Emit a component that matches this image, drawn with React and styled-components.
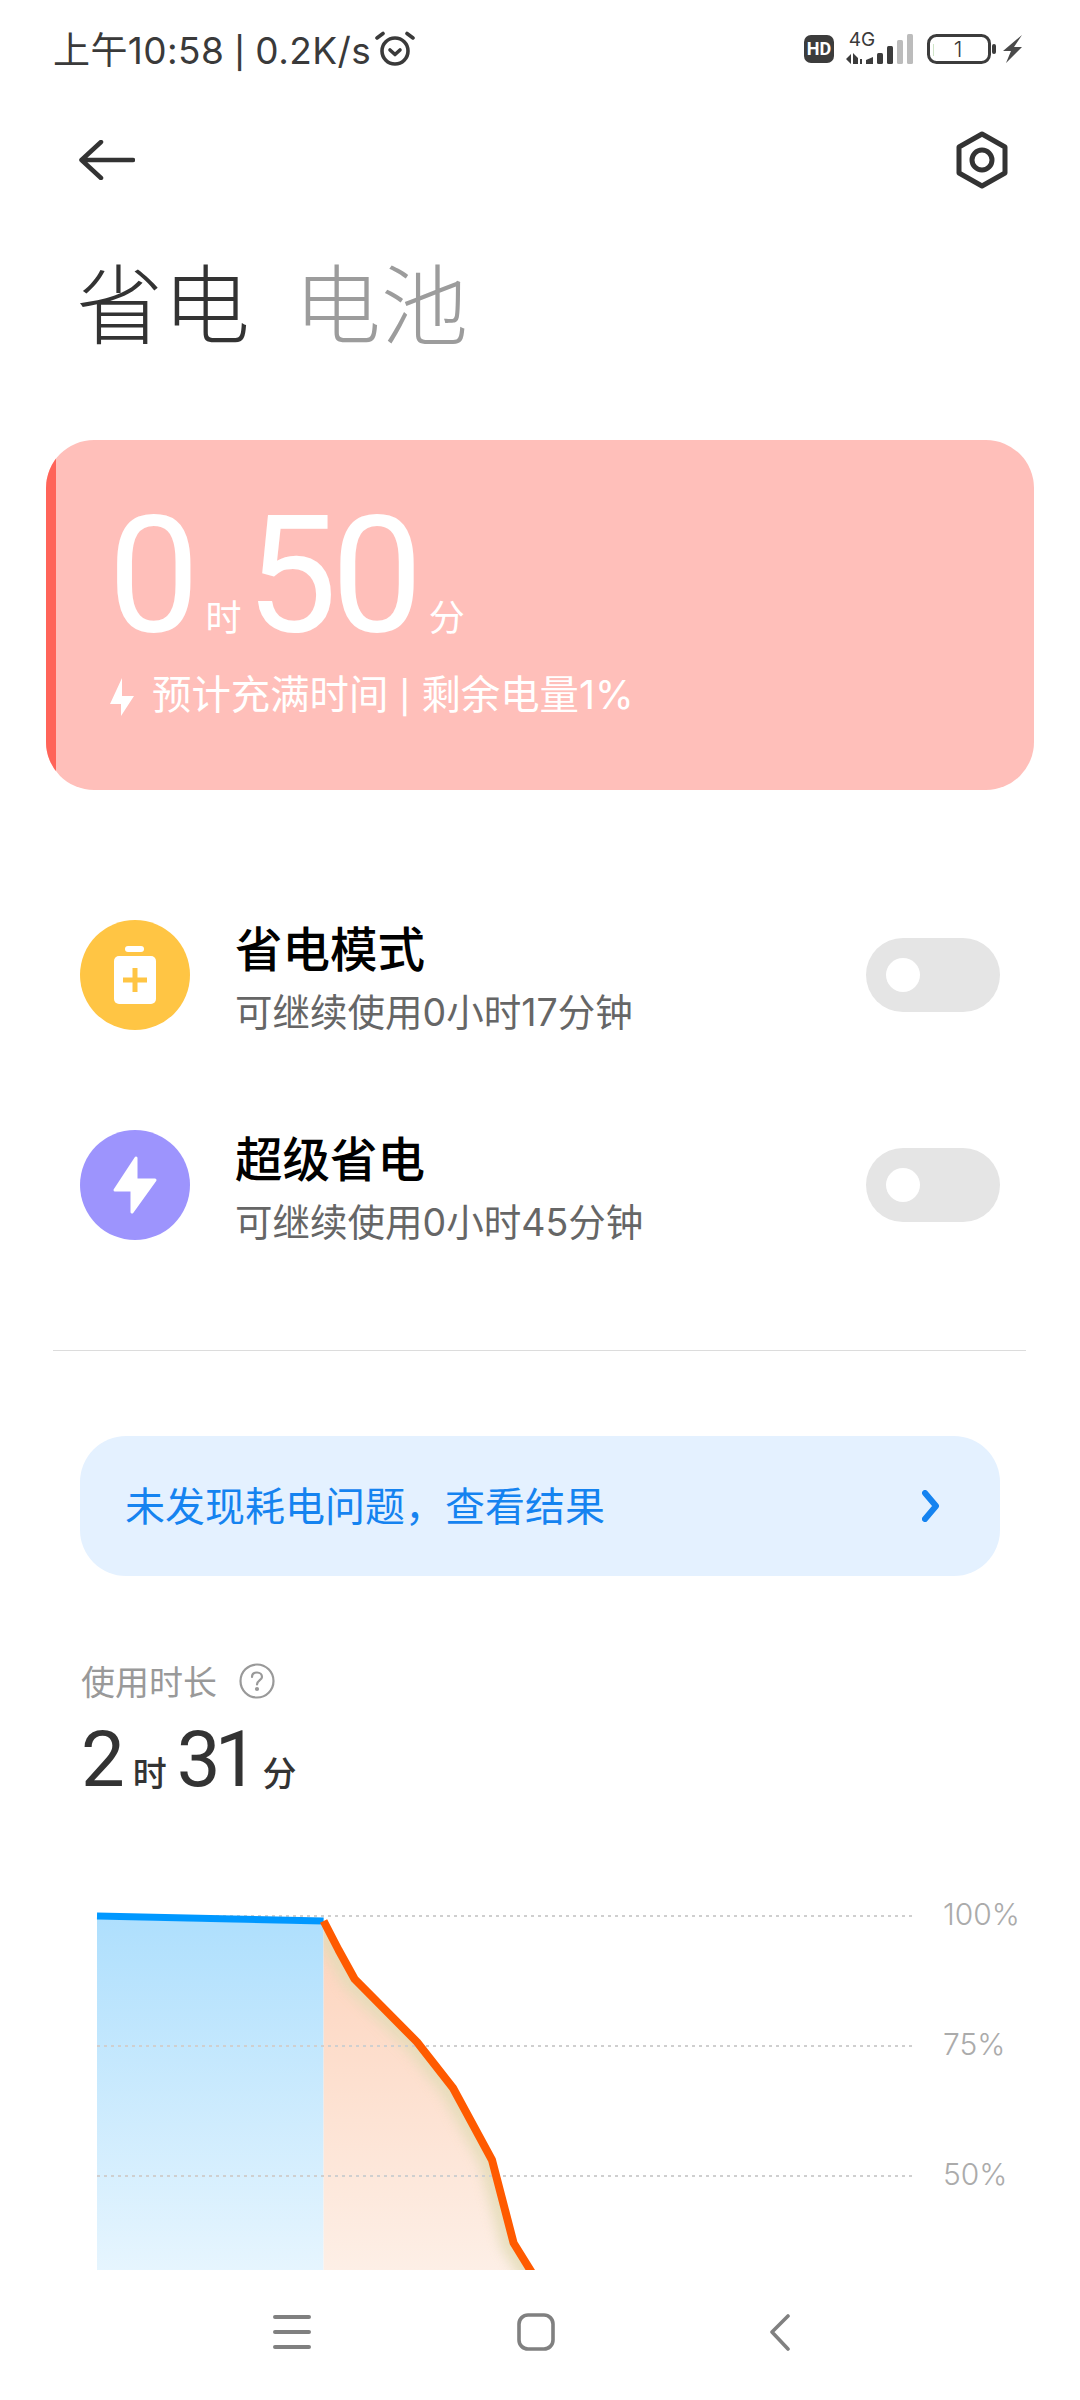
import React from "react";
import styled, { createGlobalStyle } from "styled-components";

const GlobalStyle = createGlobalStyle`
  html, body {
    margin: 0;
    padding: 0;
    background: #fff;
  }
`;

const cjk = `"Noto Sans CJK SC", "Noto Sans", sans-serif`;
const latin = `Roboto, "Noto Sans CJK SC", sans-serif`;
const mixed = `Inter, "Noto Sans CJK SC", sans-serif`;

const Page = styled.div`
  width: 1080px;
  height: 2400px;
  display: flex;
  flex-direction: column;
  overflow: hidden;
  background: #fff;
  font-family: ${cjk};
`;

const StatusBar = styled.div`
  height: 96px;
  flex: none;
  display: flex;
  align-items: center;
  justify-content: space-between;
  padding: 0 56px 0 53px;
`;
const StatusLeft = styled.div`
  display: flex;
  align-items: center;
  gap: 4px;
  font-family: ${mixed};
  font-size: 37px;
  letter-spacing: 0.4px;
  color: #3a3a3a;
  white-space: nowrap;
`;
const Sep = styled.span`
  font-size: ${(p) => p.$size}px;
  margin: 0 ${(p) => p.$gap}px;
  font-weight: 500;
`;

const Toolbar = styled.div`
  height: 128px;
  flex: none;
  display: flex;
  align-items: center;
  justify-content: space-between;
  padding: 0 71px 0 79px;
`;

const Tabs = styled.div`
  display: flex;
  gap: 44px;
  padding: 33px 0 0 76px;
  flex: none;
`;
const Tab = styled.div`
  font-size: 87px;
  line-height: 87px;
  font-weight: 300;
  color: ${(p) => (p.$active ? "#333" : "#9c9c9c")};
`;

const Card = styled.div`
  flex: none;
  height: 350px;
  margin: 96px 46px 0;
  display: flex;
  border-radius: 48px;
  overflow: hidden;
  background: #ffbfba;
`;
const CardStrip = styled.div`
  width: 10px;
  flex: none;
  background: #ff6459;
`;
const CardBody = styled.div`
  flex: 1;
  padding: 46px 0 0 52px;
  color: #fff;
`;
const Big = styled.div`
  display: flex;
  align-items: baseline;
  height: 180px;
  line-height: 180px;
`;
const BigNum = styled.span`
  font-family: ${latin};
  font-size: 163px;
  letter-spacing: -6px;
`;
const BigUnit = styled.span`
  font-size: 36px;
  margin: 0 4px 0 12px;
`;
const CardInfo = styled.div`
  display: flex;
  align-items: center;
  margin: 7px 0 0 2px;
  gap: 18px;
  font-family: ${mixed};
  font-size: 39.4px;
  line-height: 44px;
  white-space: nowrap;
`;

const ModeList = styled.div`
  margin-top: 80px;
  flex: none;
`;
const ModeRow = styled.div`
  height: 210px;
  padding: 0 80px;
  display: flex;
  align-items: center;
`;
const ModeIcon = styled.div`
  width: 110px;
  height: 110px;
  flex: none;
  border-radius: 50%;
  background: ${(p) => p.$color};
  display: flex;
  align-items: center;
  justify-content: center;
`;
const ModeText = styled.div`
  flex: 1;
  margin-left: 45px;
  padding-top: 4px;
`;
const ModeTitle = styled.div`
  font-size: 47.5px;
  line-height: 58px;
  font-weight: 500;
  color: #000;
`;
const ModeSub = styled.div`
  font-family: ${mixed};
  font-size: 37.5px;
  line-height: 46px;
  margin-top: 14px;
  color: #666;
`;
const Toggle = styled.div`
  width: 134px;
  height: 74px;
  flex: none;
  border-radius: 37px;
  background: #e5e5e5;
  display: flex;
  align-items: center;
  padding-left: 20px;
  box-sizing: border-box;
`;
const Knob = styled.div`
  width: 34px;
  height: 34px;
  border-radius: 50%;
  background: #fff;
`;

const Divider = styled.div`
  height: 1px;
  flex: none;
  margin: 60px 54px 0 53px;
  background: #dcdcdc;
`;

const Banner = styled.div`
  flex: none;
  height: 140px;
  margin: 85px 80px 0;
  padding: 0 60px 0 45px;
  box-sizing: border-box;
  border-radius: 46px;
  background: #e4f1ff;
  display: flex;
  align-items: center;
  justify-content: space-between;
  font-size: 40px;
  line-height: 44px;
  color: #1583f0;
`;
const BannerText = styled.span`
  margin-bottom: 5px;
`;

const Usage = styled.div`
  flex: none;
  margin: 83px 0 0 81px;
`;
const UsageLabel = styled.div`
  display: flex;
  align-items: center;
  gap: 22px;
  font-size: 34px;
  line-height: 44px;
  color: #999;
`;
const UsageValue = styled.div`
  display: flex;
  align-items: baseline;
  height: 80px;
  line-height: 80px;
  margin-top: 17px;
  color: #333;
`;
const UsageNum = styled.span`
  font-family: ${latin};
  font-size: 78px;
  letter-spacing: -6px;
`;
const UsageUnit = styled.span`
  font-size: 34px;
  font-weight: 500;
  margin: 0 10px 0 ${(p) => (p.$last ? 10 : 14)}px;
`;

const ChartWrap = styled.div`
  flex: 1;
  min-height: 0;
  overflow: hidden;
`;
const ChartSvg = styled.svg`
  display: block;
  width: 1080px;
  height: 470px;
`;
const AxisLabel = styled.text`
  font-family: Inter, sans-serif;
  font-size: 30px;
  font-weight: 300;
  fill: #ababab;
`;

const NavBar = styled.div`
  height: 130px;
  flex: none;
  display: grid;
  grid-template-columns: 244px 244px 244px;
  justify-content: center;
  align-items: center;
  justify-items: center;
  padding: 0 8px 6px 0;
  box-sizing: border-box;
  background: #fff;
`;

const BackArrow = () => (
  <svg width="56" height="40" viewBox="0 0 56 40" fill="none" stroke="#333" strokeWidth="4.5" strokeLinecap="round" strokeLinejoin="round">
    <path d="M2.5 20H54M22 2L2.5 20L22 38" />
  </svg>
);

const HexIcon = () => (
  <svg width="54" height="58" viewBox="0 0 54 58" fill="none" stroke="#333" strokeWidth="5" strokeLinejoin="round">
    <path d="M27 3L50 16V42L27 55L4 42V16Z" />
    <circle cx="27" cy="29" r="10" />
  </svg>
);

const AlarmIcon = () => (
  <svg width="40" height="36" viewBox="0 0 40 36" fill="none" stroke="#3a3a3a" strokeWidth="3.6" strokeLinecap="round" strokeLinejoin="round">
    <circle cx="20" cy="21" r="13" />
    <path d="M15 20L20 24.5L25 20" />
    <path d="M2 8L8 3.5M38 8L32 3.5" />
  </svg>
);

const StatusIcons = () => (
  <svg width="220" height="40" viewBox="804 28 220 40">
    <rect x="804" y="35" width="30" height="28" rx="7" fill="#3c3c3c" />
    <text x="819" y="55" textAnchor="middle" fontFamily="Roboto, sans-serif" fontWeight="700" fontSize="18" fill="#fff">HD</text>
    <text x="862" y="46" textAnchor="middle" fontFamily="Inter, sans-serif" fontSize="19" fill="#3a3a3a">4G</text>
    <path d="M846 59L851 54V64ZM853 53L858 58H858V64H853ZM860 59H862V64H860Z" fill="#3c3c3c" />
    <path d="M866 60L873 57V64H866Z" fill="#3c3c3c" />
    <rect x="877" y="53" width="6" height="11" rx="1.5" fill="#3c3c3c" />
    <rect x="887" y="46" width="6" height="18" rx="1.5" fill="#3c3c3c" />
    <rect x="897" y="40" width="6" height="24" rx="1.5" fill="#bcbcbc" />
    <rect x="907" y="34" width="6" height="30" rx="1.5" fill="#bcbcbc" />
    <rect x="928.5" y="35.5" width="61" height="27" rx="8" fill="none" stroke="#3c3c3c" strokeWidth="3" />
    <rect x="933" y="44" width="1" height="12" fill="#cfe5c8" />
    <text x="958" y="57" textAnchor="middle" fontFamily="Inter, sans-serif" fontWeight="300" fontSize="22" fill="#3a3a3a">1</text>
    <rect x="992" y="44" width="4" height="10" rx="2" fill="#3c3c3c" />
    <path d="M1022 35L1003 51H1011L1006 63L1022 47H1014Z" fill="#4a4a4a" />
  </svg>
);

const BoltSmall = () => (
  <svg width="24" height="38" viewBox="0 0 24 38" fill="#fff">
    <path d="M12 0L0 26H11V38L24 18H12Z" />
  </svg>
);

const BatteryPlus = () => (
  <svg width="42" height="58" viewBox="0 0 42 58" fill="#fff">
    <rect x="11" y="0" width="19" height="6" rx="3" />
    <rect x="0" y="10" width="42" height="48" rx="5" />
    <path d="M18.5 22H23.5V31.5H33V36.5H23.5V46H18.5V36.5H9V31.5H18.5Z" fill="#ffc544" />
  </svg>
);

const BoltIcon = () => (
  <svg width="44" height="58" viewBox="0 0 44 58" fill="#fff" stroke="#fff" strokeWidth="3" strokeLinejoin="round">
    <path d="M23 2V24H42L19 56V34H2Z" />
  </svg>
);

const Chevron = () => (
  <svg width="18" height="32" viewBox="0 0 18 32" fill="none" stroke="#1583f0" strokeWidth="6" strokeLinecap="round" strokeLinejoin="round">
    <path d="M3 3L14 16L3 29" />
  </svg>
);

const HelpIcon = () => (
  <svg width="36" height="36" viewBox="0 0 36 36" fill="none" stroke="#999" strokeWidth="2.2">
    <circle cx="18" cy="18" r="16.5" />
    <path d="M13 14C13 11 15 9.5 18 9.5C21 9.5 23 11.5 23 14C23 17 18 17.5 18 21.5" strokeLinecap="round" />
    <circle cx="18" cy="26" r="1" fill="#999" />
  </svg>
);

const MenuIcon = () => (
  <svg width="38" height="36" viewBox="0 0 38 36" fill="none" stroke="#808080" strokeWidth="4" strokeLinecap="round">
    <path d="M2 3H36M2 18H36M2 33H36" />
  </svg>
);

const HomeIcon = () => (
  <svg width="38" height="38" viewBox="0 0 38 38" fill="none" stroke="#808080" strokeWidth="3.6">
    <rect x="2" y="2" width="34" height="34" rx="9" />
  </svg>
);

const NavBack = () => (
  <svg width="22" height="38" viewBox="0 0 22 38" fill="none" stroke="#808080" strokeWidth="3.6" strokeLinecap="round" strokeLinejoin="round">
    <path d="M19 3L3 19L19 36" />
  </svg>
);

const orangeLine = "323.6,1921 338.6,1950 354.6,1979 417,2042 453,2088 492,2160 513.6,2243 534,2276";
const grid = [1916, 2046, 2176];
const axis = [
  { y: 1925, label: "100%" },
  { y: 2055, label: "75%" },
  { y: 2185, label: "50%" },
];

const Chart = () => (
  <ChartSvg viewBox="0 1800 1080 470">
    <defs>
      <linearGradient id="blueFill" x1="0" y1="1916" x2="0" y2="2270" gradientUnits="userSpaceOnUse">
        <stop offset="0" stopColor="#aedffd" />
        <stop offset="1" stopColor="#e6f5fe" />
      </linearGradient>
      <linearGradient id="orangeFill" x1="0" y1="1921" x2="0" y2="2270" gradientUnits="userSpaceOnUse">
        <stop offset="0" stopColor="#fdd3bc" />
        <stop offset="1" stopColor="#fdefe6" />
      </linearGradient>
      <clipPath id="orangeClip">
        <polygon points={`${orangeLine} 534,2270 323.6,2270`} />
      </clipPath>
      <filter id="soft" x="-20%" y="-20%" width="140%" height="140%">
        <feGaussianBlur stdDeviation="6" />
      </filter>
    </defs>
    <polygon points="97,1919 323.6,1924 323.6,2270 97,2270" fill="url(#blueFill)" />
    <polygon points={`${orangeLine} 534,2270 323.6,2270`} fill="url(#orangeFill)" />
    <g clipPath="url(#orangeClip)">
      <polyline points={orangeLine} fill="none" stroke="#e3dcb8" strokeWidth="26" opacity="0.85" filter="url(#soft)" />
    </g>
    {grid.map((y) => (
      <line key={y} x1="97" x2="914" y1={y} y2={y} stroke="#cfcfcf" strokeWidth="2" strokeDasharray="3 4" />
    ))}
    <polyline points="97,1916 323.6,1921" fill="none" stroke="#0098ff" strokeWidth="7" />
    <polyline points={orangeLine} fill="none" stroke="#ff5a00" strokeWidth="8" strokeLinejoin="round" />
    {axis.map((a) => (
      <AxisLabel key={a.label} x="943" y={a.y}>{a.label}</AxisLabel>
    ))}
  </ChartSvg>
);

const App = () => {
  return (
    <Page>
      <GlobalStyle />
      <StatusBar>
        <StatusLeft>
          <span>
            上午10:58<Sep $size={31} $gap={10}>|</Sep>0.2K/s
          </span>
          <AlarmIcon />
        </StatusLeft>
        <StatusIcons />
      </StatusBar>
      <Toolbar>
        <BackArrow />
        <HexIcon />
      </Toolbar>
      <Tabs>
        <Tab $active>省电</Tab>
        <Tab>电池</Tab>
      </Tabs>
      <Card>
        <CardStrip />
        <CardBody>
          <Big>
            <BigNum>0</BigNum>
            <BigUnit>时</BigUnit>
            <BigNum>50</BigNum>
            <BigUnit>分</BigUnit>
          </Big>
          <CardInfo>
            <BoltSmall />
            <span>
              预计充满时间<Sep $size={32} $gap={11}>|</Sep>剩余电量1%
            </span>
          </CardInfo>
        </CardBody>
      </Card>
      <ModeList>
        <ModeRow>
          <ModeIcon $color="#ffc544">
            <BatteryPlus />
          </ModeIcon>
          <ModeText>
            <ModeTitle>省电模式</ModeTitle>
            <ModeSub>可继续使用0小时17分钟</ModeSub>
          </ModeText>
          <Toggle>
            <Knob />
          </Toggle>
        </ModeRow>
        <ModeRow>
          <ModeIcon $color="#9d94fd">
            <BoltIcon />
          </ModeIcon>
          <ModeText>
            <ModeTitle>超级省电</ModeTitle>
            <ModeSub>可继续使用0小时45分钟</ModeSub>
          </ModeText>
          <Toggle>
            <Knob />
          </Toggle>
        </ModeRow>
      </ModeList>
      <Divider />
      <Banner>
        <BannerText>未发现耗电问题，查看结果</BannerText>
        <Chevron />
      </Banner>
      <Usage>
        <UsageLabel>
          使用时长
          <HelpIcon />
        </UsageLabel>
        <UsageValue>
          <UsageNum>2</UsageNum>
          <UsageUnit>时</UsageUnit>
          <UsageNum>31</UsageNum>
          <UsageUnit $last>分</UsageUnit>
        </UsageValue>
      </Usage>
      <ChartWrap>
        <Chart />
      </ChartWrap>
      <NavBar>
        <MenuIcon />
        <HomeIcon />
        <NavBack />
      </NavBar>
    </Page>
  );
};

export default App;
